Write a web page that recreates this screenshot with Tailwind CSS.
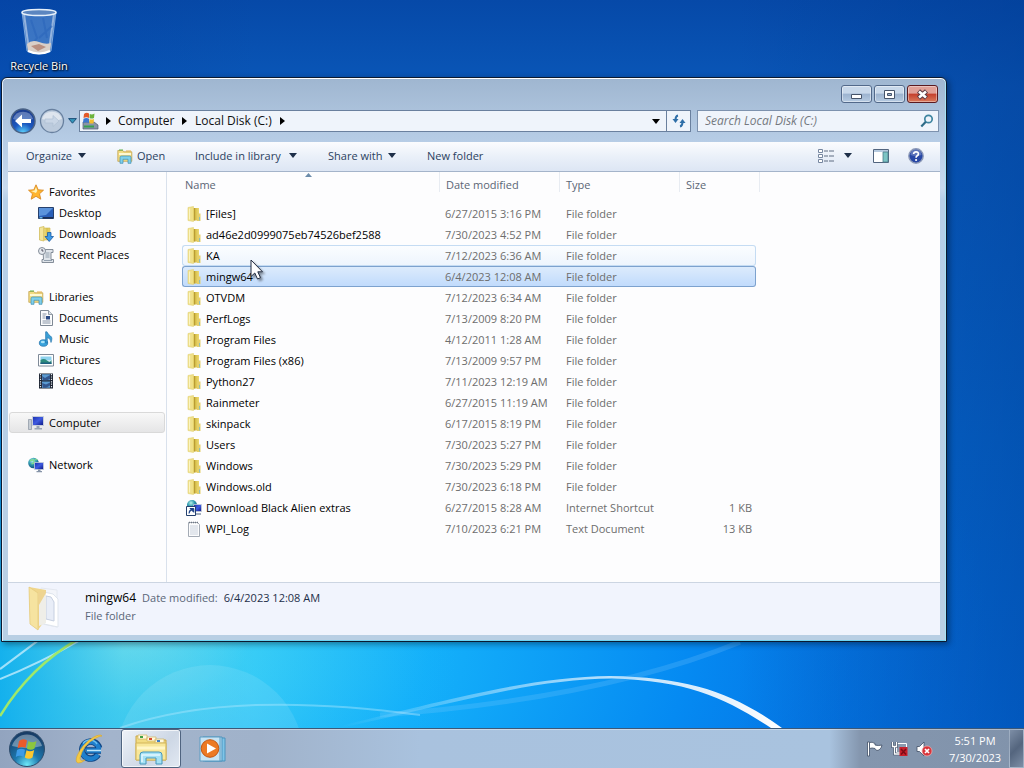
<!DOCTYPE html>
<html lang="en">
<head>
<meta charset="utf-8">
<title>Local Disk (C:)</title>
<script src="https://cdn.jsdelivr.net/npm/@tailwindcss/browser@4"></script>
</head>
<body class="h-screen flex flex-col overflow-hidden font-['Open_Sans','Noto_Sans',sans-serif] text-[11px] leading-4 text-black bg-[#0a55b5]">

<svg class="absolute w-0 h-0" aria-hidden="true">
  <defs>
    <linearGradient id="fold" x1="0" x2="1"><stop offset="0" stop-color="#f4e68e"/><stop offset=".5" stop-color="#d9c14c"/><stop offset="1" stop-color="#ecd975"/></linearGradient>
    <linearGradient id="scr" x1="0" y1="0" x2="1" y2="1"><stop offset="0" stop-color="#1a2fae"/><stop offset=".5" stop-color="#3f5be0"/><stop offset="1" stop-color="#0a1580"/></linearGradient>
    <radialGradient id="globe" cx=".4" cy=".3" r=".7"><stop offset="0" stop-color="#b8f0e8"/><stop offset=".5" stop-color="#2f9bb0"/><stop offset="1" stop-color="#14507e"/></radialGradient>
  </defs>
  <symbol id="folder" viewBox="0 0 16 18">
    <path d="M2 2.500 7.500 1.500V16.500L2 15.500Z" fill="#f0e08a" stroke="#e2d272" stroke-width=".6"/>
    <path d="M6 3h7v12.500H6Z" fill="url(#fold)"/>
    <path d="M8.500 3v12.500" stroke="#b99c34" stroke-width="1.200"/>
    <path d="M11 8.500h3.500v7.500H11Z" fill="#e5cf6a"/>
    <path d="M13.500 12v3.500" stroke="#8fc0b4"/>
    <path d="M3.500 3.500v11" stroke="#fbf4c0" stroke-width="1.200"/>
  </symbol>
  <symbol id="library" viewBox="0 0 16 16">
    <path d="M.8 2.500h5l1 1.300h8v9.500h-14z" fill="#f3dc83" stroke="#c4a652" stroke-width=".8"/>
    <path d="M2 5h12v2H2z" fill="#fff8d2"/><path d="M2 2h4" stroke="#5fae48"/><path d="M9 3h5" stroke="#e5b04a"/>
    <path d="M3 15.300V9.500q0-1.500 1.500-1.500h8Q14 8 14 9.500v5.800h-3v-4H6v4z" fill="#7fd0ea" stroke="#3e8eb4" stroke-width=".7"/>
  </symbol>
</svg>

<main class="relative flex-1 min-h-0 flex flex-col">
  <svg class="absolute inset-0 w-full h-full" viewBox="0 0 1024 729" preserveAspectRatio="none" aria-hidden="true">
    <defs>
      <linearGradient id="sky" x1="0" y1="0" x2="0" y2="1"><stop offset="0" stop-color="#0649a8"/><stop offset=".12" stop-color="#0a57b8"/><stop offset=".6" stop-color="#0668cf"/><stop offset="1" stop-color="#0470e2"/></linearGradient>
      <radialGradient id="glow" gradientUnits="userSpaceOnUse" cx="130" cy="640" r="860" gradientTransform="translate(0 256) scale(1 .6)"><stop offset="0" stop-color="#8cecf0"/><stop offset=".14" stop-color="#38cdf6"/><stop offset=".35" stop-color="#14b0fa"/><stop offset=".65" stop-color="#058af2"/><stop offset="1" stop-color="#0478e8" stop-opacity="0"/></radialGradient>
      <linearGradient id="dark" x1="0" x2="1"><stop offset="0" stop-color="#0038a0" stop-opacity=".25"/><stop offset=".25" stop-color="#003a8a" stop-opacity="0"/><stop offset=".72" stop-color="#003a90" stop-opacity="0"/><stop offset="1" stop-color="#003a90" stop-opacity=".45"/></linearGradient>
      <linearGradient id="arc" x1="0" x2="1"><stop offset="0" stop-color="#fff" stop-opacity="0"/><stop offset=".6" stop-color="#fff" stop-opacity=".7"/><stop offset="1" stop-color="#fff"/></linearGradient>
      <linearGradient id="lake" x1="0" x2="1"><stop offset="0" stop-color="#10b4f0" stop-opacity=".8"/><stop offset=".12" stop-color="#4fdcf4" stop-opacity=".5"/><stop offset=".45" stop-color="#18b4f8" stop-opacity="0"/></linearGradient>
    </defs>
    <path d="M0 0H1024V729H0z" fill="url(#sky)"/>
    <path d="M0 0H1024V729H0z" fill="url(#glow)"/>
    <path d="M0 0H1024V729H0z" fill="url(#dark)"/>
    <path d="M0 642H1024V729H0z" fill="url(#lake)"/>
    <circle cx="210" cy="760" r="94" fill="#fff" fill-opacity=".1"/>
    <path d="M0 680Q40 664 82 640M0 670Q20 655 40 640" stroke="#d8f4ff" stroke-opacity=".7" stroke-width="2" fill="none"/>
    <path d="M0 717Q30 668 78 640" stroke="#9fe86a" stroke-width="2.500" fill="none"/>
    <path d="M120 729Q230 690 420 716" stroke="#b8ecff" stroke-opacity=".4" stroke-width="2" fill="none"/>
    <path d="M340 727C450 700 530 678 610 677C690 678 735 695 782 729L771 729C725 699 690 682 612 679.500C530 680 450 706 340 729Z" fill="url(#arc)"/>
    <path d="M380 716Q600 700 740 643" stroke="#8fd4ff" stroke-opacity=".2" stroke-width="5" fill="none"/>
  </svg>

  <a href="#" class="relative w-[78px] h-[77px] flex flex-col items-center pt-2 text-white [text-shadow:1px_1px_2px_#000,0_0_2px_#001]">
    <svg class="w-10 h-[50px] shrink-0" viewBox="0 0 40 50" aria-hidden="true">
      <path d="M3 4 8 43Q20 49 32 43L37 4Z" fill="#6f9fdc" fill-opacity=".5" stroke="#bcd8f4" stroke-opacity=".6"/>
      <path d="M5 6 10 42M35 6 30 42" stroke="#fff" stroke-opacity=".45" stroke-width="2"/>
      <path d="M12 12 18 30 14 35M33 18 20 30M24 10 28 30" stroke="#2c66bb" stroke-opacity=".6" stroke-width="2" fill="none"/>
      <path d="M8 36Q13 31 20 34T32 35L31 43Q20 47 9 43Z" fill="#d9cfc8"/><path d="M12 38 20 36 27 39 19 43Z" fill="#b98f80"/><path d="M9 43Q20 48 31 43" stroke="#fff" stroke-width="2" fill="none"/>
      <ellipse cx="20" cy="4.500" rx="17" ry="3" fill="#5c86c0" stroke="#e6f0fa" stroke-width="1.500"/>
    </svg>
    <span>Recycle Bin</span>
  </a>

  <section class="relative flex-1 min-h-0 ml-px mr-[77px] mb-[86px] flex flex-col rounded-t-md border border-[#0b1a30] bg-[linear-gradient(#9fb6d0,#b7cde6_64px,#c8daee_110px,#b6cfe8_122px,#b9cfe4)] px-[6px] pb-[6px] [box-shadow:inset_0_1px_#fff,inset_1px_0_#e3eefa,inset_-1px_0_#a5e2f4,inset_0_-1px_#6fd4f2,2px_2px_6px_#0006]">
    <div class="flex justify-end gap-[2px] h-[30px] pt-[7px] pr-[2px] shrink-0">
      <button aria-label="Minimize" class="w-[31px] h-[18px] grid place-items-center rounded-[3px] border border-[#52698a] bg-[linear-gradient(#c8d8ea_45%,#9cb3cf_50%,#b6cbe2)] [box-shadow:inset_0_0_0_1px_#ffffff70]"><svg class="w-[13px] h-[11px]" viewBox="0 0 13 11"><path d="M1.500 5.500h10v4h-10z" fill="#fff" stroke="#46546a"/></svg></button>
      <button aria-label="Maximize" class="w-[31px] h-[18px] grid place-items-center rounded-[3px] border border-[#52698a] bg-[linear-gradient(#c8d8ea_45%,#9cb3cf_50%,#b6cbe2)] [box-shadow:inset_0_0_0_1px_#ffffff70]"><svg class="w-[13px] h-[11px]" viewBox="0 0 13 11"><path d="M1.500 1.500h10v8h-10z" fill="#fff" stroke="#46546a"/><path d="M4.500 4.500h4v2h-4z" fill="#9cb3cf" stroke="#46546a"/></svg></button>
      <button aria-label="Close" class="w-[31px] h-[18px] grid place-items-center rounded-[3px] border border-[#5a1a20] bg-[linear-gradient(#e0a097_45%,#c43f2c_50%,#d97a5c)] [box-shadow:inset_0_0_0_1px_#ffffff60]"><svg class="w-[13px] h-[11px]" viewBox="0 0 13 11"><path d="M2.500 2 10.500 9M10.500 2 2.500 9" stroke="#5a3a44" stroke-width="4.600"/><path d="M3 2.500 10 8.500M10 2.500 3 8.500" stroke="#fff" stroke-width="2.600"/></svg></button>
    </div>

    <div class="flex items-center h-[26px] mb-2 shrink-0 pr-px">
      <div class="flex items-center w-[71px] shrink-0 gap-[3px] pl-[2px]">
        <button aria-label="Back" class="w-[26px] h-[26px]"><svg viewBox="0 0 26 26"><defs><radialGradient id="bk" cx=".5" cy="1" r=".9"><stop offset="0" stop-color="#5fd8ff"/><stop offset=".45" stop-color="#1b58c0"/><stop offset="1" stop-color="#1c3f92"/></radialGradient></defs><circle cx="13" cy="13" r="12" fill="url(#bk)" stroke="#4a6285" stroke-width="1.500"/><path d="M3 11A10.500 10.500 0 0 1 23 11Q13 15 3 11" fill="#fff" fill-opacity=".3"/><path d="M5 13 12 6.500V11H21V15H12V19.500Z" fill="#fff"/></svg></button>
        <button aria-label="Forward" class="w-[26px] h-[26px]"><svg viewBox="0 0 26 26"><circle cx="13" cy="13" r="11.500" fill="#bccbdd" stroke="#68809f" stroke-width="1.300"/><path d="M3 11A10.500 10.500 0 0 1 23 11Q13 15 3 11" fill="#fff" fill-opacity=".5"/><path d="M20 13 14 7.500V11H6V15H14V18.500Z" fill="#c9d6e6" stroke="#b0c0d3" stroke-width=".7"/></svg></button>
        <button aria-label="Recent pages" class="w-[9px] h-[6px]"><svg viewBox="0 0 9 6"><path d="M.6.6h7.800L4.500 5.200Z" fill="#3596bb" stroke="#1d4f78"/></svg></button>
      </div>
      <nav aria-label="Address" class="flex flex-1 items-center h-[22px] border border-[#6a809e] bg-[#eff4fb] text-[#111] min-w-0">
        <svg class="w-[18px] h-[18px] ml-px" viewBox="0 0 18 18" aria-hidden="true"><path d="M2 10h11l4 3v4H2z" fill="#8895a8" stroke="#4e5c70" stroke-width=".7"/><path d="M3 13.500h10v2H3z" fill="#37a050"/><path d="M3 2Q5.500 0 8 1.500V6Q5.500 4.500 2.500 6Z" fill="#e2592a"/><path d="M8.700 2Q11 3 13.500 1.500L13 6Q10.500 7 8.500 6Z" fill="#6cb33c"/><path d="M2.500 6.700Q5.500 5.500 8 6.700V11Q5 9.500 2 11Z" fill="#3c78d0"/><path d="M8.500 7Q10.500 8 13 7L12.500 11.500H8.300Z" fill="#f2bd2c"/></svg>
        <svg class="w-[5px] h-2 ml-[7px]" viewBox="0 0 5 8" aria-hidden="true"><path d="M0 0 5 4 0 8Z"/></svg>
        <a href="#" class="ml-[7px] w-[55px] text-[12px]">Computer</a>
        <svg class="w-[5px] h-2 ml-[9px]" viewBox="0 0 5 8" aria-hidden="true"><path d="M0 0 5 4 0 8Z"/></svg>
        <a href="#" class="ml-2 w-[76px] text-[12px] whitespace-nowrap">Local Disk (C:)</a>
        <svg class="w-[5px] h-2 ml-[9px]" viewBox="0 0 5 8" aria-hidden="true"><path d="M0 0 5 4 0 8Z"/></svg>
        <button aria-label="Previous locations" class="ml-auto mr-[6px]"><svg class="w-2 h-[5px]" viewBox="0 0 8 5"><path d="M0 0H8L4 5Z"/></svg></button>
        <button aria-label="Refresh" class="w-6 h-full grid place-items-center border-l border-[#6a809e]"><svg class="w-[14px] h-[14px]" viewBox="0 0 14 14" fill="none" stroke="#2f6fa8" stroke-width="2"><path d="M6 1.500Q3.500 2 3.500 6"/><path d="M.5 5h6L3.500 9Z" fill="#2f6fa8" stroke="none"/><path d="M8 12.500Q10.500 12 10.500 8"/><path d="M7.500 9h6L10.500 5Z" fill="#2f6fa8" stroke="none"/></svg></button>
      </nav>
      <div class="ml-[6px] w-[242px] h-[22px] flex items-center border border-[#7d92ae] bg-[#eff4fb] pl-[7px] pr-1">
        <input type="text" aria-label="Search Local Disk (C:)" placeholder="Search Local Disk (C:)" class="flex-1 min-w-0 bg-transparent italic text-[12px] outline-none placeholder:text-[#75797f]">
        <svg class="w-[14px] h-[14px]" viewBox="0 0 14 14" fill="none" aria-hidden="true"><circle cx="8.500" cy="5" r="3.700" stroke="#3f85a0" stroke-width="1.700"/><path d="M5.800 7.800 1.300 12.500" stroke="#2f6c88" stroke-width="2.200"/></svg>
      </div>
    </div>

    <div class="flex items-center h-[30px] pb-[2px] shrink-0 bg-[linear-gradient(#fbfcfe,#eaf0f9_50%,#dde6f4)] border-b border-[#a4b4ca] text-[#2b4160] pl-[18px] pr-[16px] whitespace-nowrap">
      <button class="flex items-center gap-[6px] w-[91px]">Organize <svg class="w-2 h-[5px]" viewBox="0 0 8 5"><path d="M0 0H8L4 5Z" fill="#1e2f49"/></svg></button>
      <button class="flex items-center gap-1 w-[78px]"><svg class="w-4 h-4"><use href="#library"/></svg>Open</button>
      <button class="flex items-center gap-2 w-[133px]">Include in library <svg class="w-2 h-[5px]" viewBox="0 0 8 5"><path d="M0 0H8L4 5Z" fill="#1e2f49"/></svg></button>
      <button class="flex items-center gap-[6px] w-[99px]">Share with <svg class="w-2 h-[5px]" viewBox="0 0 8 5"><path d="M0 0H8L4 5Z" fill="#1e2f49"/></svg></button>
      <button>New folder</button>
      <button aria-label="Change your view" class="ml-auto flex items-center gap-[10px]"><svg class="w-4 h-[14px]" viewBox="0 0 16 14" fill="none"><path d="M.5.500h4v3h-4zM.5 5.500h4v3h-4zM.5 10.500h4v3h-4z" fill="#fff" stroke="#7787a0"/><path d="M6 2h4M11 2h5M6 7h4M11 7h5M6 12h4M11 12h5" stroke="#5f6c82"/></svg><svg class="w-2 h-[5px]" viewBox="0 0 8 5"><path d="M0 0H8L4 5Z" fill="#1e2f49"/></svg></button>
      <button aria-label="Show the preview pane" class="ml-[21px]"><svg class="w-4 h-[14px]" viewBox="0 0 16 14"><path d="M.5.500h15v13H.5z" fill="#fff" stroke="#51647e"/><path d="M1 1h14v2H1z" fill="#b7cbe0"/><path d="M10 3h5v10h-5z" fill="#7cc4c4" stroke="#4c7d8e" stroke-width=".8"/></svg></button>
      <button aria-label="Get help" class="ml-[19px]"><svg class="w-4 h-4" viewBox="0 0 16 16" fill="none"><circle cx="8" cy="8" r="7.200" fill="#2747a5" stroke="#8d9ab8" stroke-width="1.400"/><path d="M2.500 7A5.500 5.500 0 0 1 13.500 7Q8 9 2.500 7" fill="#fff" fill-opacity=".25"/><path d="M5.600 6Q5.800 3.800 8.100 3.800T10.400 5.900Q10.400 7 9.200 7.800T8.100 9.800" stroke="#fff" stroke-width="1.700"/><circle cx="8.100" cy="12" r="1.100" fill="#fff"/></svg></button>
    </div>

    <div class="flex flex-1 min-h-0 bg-[#fdfdfe]">
      <nav aria-label="Folders" class="w-[159px] shrink-0 border-r border-[#d9e1ec] pt-[9px] flex flex-col gap-[21px] whitespace-nowrap">
        <ul>
          <li><a href="#" class="flex items-center h-[21px] pl-5 gap-[5px]"><svg class="w-4 h-4" viewBox="0 0 16 16"><path d="M8 .8 10.200 5.800 15.500 6.200 11.500 9.800 12.800 15.200 8 12.300 3.200 15.200 4.500 9.800.5 6.200 5.800 5.800Z" fill="#ffb52e" stroke="#d98a25" stroke-width=".9"/><path d="M8 3 9.300 6.800 8 9 3 7 6.500 6.600Z" fill="#fff3b8"/></svg>Favorites</a></li>
          <li><a href="#" class="flex items-center h-[21px] pl-[30px] gap-[5px]"><svg class="w-4 h-4" viewBox="0 0 16 16"><path d="M.5 2.500h15v11H.5z" fill="#2a5fb8" stroke="#27406c"/><path d="M1 3h14L8 10 1 11Z" fill="#5b93dc"/><path d="M1 12h14v1.500H1z" fill="#1d2f55"/><path d="M1.500 12h3v1.500h-3z" fill="#6fb8e8"/></svg>Desktop</a></li>
          <li><a href="#" class="flex items-center h-[21px] pl-[30px] gap-[5px]"><svg class="w-4 h-4" viewBox="0 0 16 16"><path d="M1.500 1.500 6 .5V15L1.500 14Z" fill="#f3e59c" stroke="#cdb64d" stroke-width=".7"/><path d="M6 2h6v12H6Z" fill="url(#fold)" stroke="#cdb64d" stroke-width=".6"/><path d="M9.500 6.500h3.500v4h2.500L11.200 15.500 7 10.500h2.500Z" fill="#3d9be8" stroke="#1c5aa5" stroke-width=".8"/></svg>Downloads</a></li>
          <li><a href="#" class="flex items-center h-[21px] pl-[30px] gap-[5px]"><svg class="w-4 h-4" viewBox="0 0 16 16" stroke="#78828e" stroke-width=".9"><path d="M5 2.500h10v3h-2v7h2.500v3H4v-3h1.500Z" fill="#dfe4ea"/><path d="M7.500 6h4M7.500 8h4M7.500 10h4M6 13.500h8" stroke="#8b99a8"/><circle cx="4" cy="4" r="3.500" fill="#e6eaef"/><path d="M4 2v2h1.500" fill="none" stroke="#445"/></svg>Recent Places</a></li>
        </ul>
        <ul>
          <li><a href="#" class="flex items-center h-[21px] pl-5 gap-[5px]"><svg class="w-4 h-4"><use href="#library"/></svg>Libraries</a></li>
          <li><a href="#" class="flex items-center h-[21px] pl-[30px] gap-[5px]"><svg class="w-4 h-4" viewBox="0 0 16 16"><path d="M2.500.500h8l4 4v11h-12z" fill="#fbfcfd" stroke="#7e8894"/><path d="M10.500.500v4h4" fill="#d9dfe6" stroke="#7e8894" stroke-width=".8"/><path d="M4.500 4h4M4.500 6h3M4.500 8h3M4.500 11h8M4.500 13h8" stroke="#8793a5"/><path d="M8 6h4v3.500H8z" fill="#2d4c86"/></svg>Documents</a></li>
          <li><a href="#" class="flex items-center h-[21px] pl-[30px] gap-[5px]"><svg class="w-4 h-4" viewBox="0 0 16 16"><ellipse cx="5.500" cy="12" rx="4.200" ry="3.300" fill="#3aa3dc" stroke="#1d6ea8" stroke-width=".7"/><path d="M7.600 12V.8H9Q10 3.500 12.500 5T13 11.500Q12.800 7.500 9.300 6.500V12Z" fill="#3b9fd6" stroke="#1d6ea8" stroke-width=".6"/><ellipse cx="4.800" cy="11" rx="2" ry="1.200" fill="#a8e2f8"/></svg>Music</a></li>
          <li><a href="#" class="flex items-center h-[21px] pl-[30px] gap-[5px]"><svg class="w-4 h-4" viewBox="0 0 16 16"><path d="M.5 2.500h15v11.500H.5z" fill="#fff" stroke="#7f8a98"/><path d="M2.500 4.500h11v4h-11z" fill="#8ed2ee"/><path d="M2.500 8Q6 6 9 8.500T13.500 8V12h-11z" fill="#2d8a7c"/><path d="M2.500 10.500h11V12h-11z" fill="#1e5f80"/></svg>Pictures</a></li>
          <li><a href="#" class="flex items-center h-[21px] pl-[30px] gap-[5px]"><svg class="w-4 h-4" viewBox="0 0 16 16"><path d="M1 .5h14v15H1z" fill="#1b2230"/><path d="M4 1.200h8v6H4zM4 8.500h8v6.300H4z" fill="#5b9bd2"/><path d="M4 3 7 5 12 2v4L9 7.200H5ZM4 10l4 1.500 4-2v3L8 14.800H5Z" fill="#33568c"/><path d="M2.500 1v14M13.500 1v14" stroke="#e6ebf2" stroke-width="1.200" stroke-dasharray="1.200 1.200"/></svg>Videos</a></li>
        </ul>
        <ul>
          <li><a href="#" aria-current="true" class="flex items-center h-[21px] ml-px mr-px pl-[18px] gap-[5px] rounded-[3px] border border-[#d9d9d9] bg-[linear-gradient(#f8f8f8,#e5e5e6)]"><svg class="w-4 h-4" viewBox="0 0 16 16"><path d="M.5 4.500h3v10h-3z" fill="#c5ccd4" stroke="#8a94a0" stroke-width=".7"/><path d="M4.500 1.500h11v9h-11z" fill="url(#scr)" stroke="#c7ced9"/><path d="M8.500 11h3v2h-3zM6.500 13h7.500v1.500H6.500z" fill="#99a5b4"/></svg>Computer</a></li>
        </ul>
        <ul>
          <li><a href="#" class="flex items-center h-[21px] pl-5 gap-[5px]"><svg class="w-4 h-4" viewBox="0 0 16 16"><circle cx="5.500" cy="6" r="5.300" fill="url(#globe)"/><path d="M2 4Q5 2 6 4T3.500 7M7 2l2 1" stroke="#7fdc8a" stroke-width="1.300" fill="none"/><path d="M6.500 5.500h9v7h-9z" fill="url(#scr)" stroke="#c7ced9" stroke-width=".8"/><path d="M10 12.500h2.500v1.500H10zM8.500 14h5.500v1.200H8.500z" fill="#8694a8"/></svg>Network</a></li>
        </ul>
      </nav>

      <div class="relative flex-1 min-w-0 pl-[15px]">
        <svg class="absolute left-[138px] top-px w-[7px] h-1" viewBox="0 0 7 4" aria-hidden="true"><path d="M0 4 3.500 0 7 4Z" fill="#6c8caa"/></svg>
        <table class="w-[574px] table-fixed border-separate border-spacing-0 text-left whitespace-nowrap text-[#6d6d6d]">
          <colgroup><col class="w-[258px]"><col class="w-[120px]"><col class="w-[120px]"><col class="w-[76px]"></colgroup>
          <thead class="text-[#5b6675]">
            <tr class="h-[31px] align-top">
              <th class="p-0 font-normal"><span class="block h-5 pt-[5px] pl-[3px] border-r border-[#e8ecf2]">Name</span></th>
              <th class="p-0 font-normal"><span class="block h-5 pt-[5px] pl-[6px] border-r border-[#e8ecf2]">Date modified</span></th>
              <th class="p-0 font-normal"><span class="block h-5 pt-[5px] pl-[6px] border-r border-[#e8ecf2]">Type</span></th>
              <th class="p-0 font-normal"><span class="block h-5 w-20 pt-[5px] pl-[6px] border-r border-[#e8ecf2]">Size</span></th>
            </tr>
          </thead>
          <tbody id="rows"></tbody>
        </table>
      </div>
    </div>

    <footer class="flex h-[53px] shrink-0 items-start border-t border-[#ccd5e2] bg-[#f1f4fd] text-[#5a6678]">
      <svg class="ml-4 mt-[2px] w-[41px] h-[46px]" viewBox="0 0 41 46" aria-hidden="true"><path d="M17 3 33 5V42L14 38Z" fill="#f3f5fa" stroke="#e4e8f0"/><path d="M20 7 29 9 34 14V42L20 39Z" fill="#fff" stroke="#dfe5ee"/><path d="M22 11 27 12 30 17V36L22 34Z" fill="#e8edf7" stroke="#c6cfe0"/><path d="M5 2 22 5V34L14 45 6 38Z" fill="#f0d68c"/><path d="M5 2 14 8V45L6 39Z" fill="#f6e3a0" stroke="#e6cc80" stroke-width=".8"/><path d="M14 8 22 5V20L15 34Z" fill="#eed491"/><path d="M15 20 22 8V38L15 41Z" fill="#efeee8"/></svg>
      <div class="ml-5 pt-[7px]">
        <p class="flex gap-[6px] h-[18px]"><strong class="font-normal text-[12px] text-black">mingw64</strong><span>Date modified:</span><span class="text-[#1e2f49]">6/4/2023 12:08 AM</span></p>
        <p>File folder</p>
      </div>
    </footer>
  </section>

  <svg class="absolute left-[250px] top-[259px] w-4 h-6 drop-shadow-[2px_2px_1px_#0006]" viewBox="0 0 16 24" aria-hidden="true"><path d="M1 1V17.500L4.800 14 7.500 20 10.500 18.700 7.800 12.800H12.500Z" fill="#fff" stroke="#222c40" stroke-width="1"/></svg>
</main>

<footer class="flex items-stretch h-10 shrink-0 border-t border-[#3c5878] bg-[linear-gradient(90deg,#92a4bf,#a3b4cc_110px,#a0b2ca_260px,#a9c2de_420px,#a9c3df_81%,#8496ae_84%,#8193ab)] [box-shadow:inset_0_1px_#ffffff60]">
  <button aria-label="Start" class="ml-2 w-[38px]"><svg class="w-[38px] h-[38px]" viewBox="0 0 38 38"><defs><radialGradient id="orb" cx=".5" cy=".95" r=".9"><stop offset="0" stop-color="#6fe8f8"/><stop offset=".4" stop-color="#1d78ae"/><stop offset="1" stop-color="#173c66"/></radialGradient></defs><circle cx="19" cy="19" r="17.500" fill="url(#orb)" stroke="#2e4c6c"/><path d="M4 16A15.500 15.500 0 0 1 34 16Q19 20 4 16" fill="#fff" fill-opacity=".35"/><path d="M11 11Q15 8 19 10.500L17.500 18Q14 16 9.500 18.500Z" fill="#ea5a2b"/><path d="M20.500 11Q24 13.500 28.500 11L26.500 18.500Q23 21 18.800 18.500Z" fill="#8cc63f"/><path d="M9 20Q13 17.500 17 19.800L15.500 27Q12 24.500 7.800 27Z" fill="#3d9be8"/><path d="M18.500 20.300Q22 22.500 26.200 20L24.500 27.500Q21 30 16.800 27.500Z" fill="#fdc72f"/></svg></button>
  <button aria-label="Internet Explorer" class="ml-[27px] w-8 grid place-items-center"><svg class="w-8 h-8" viewBox="0 0 32 32" fill="none"><path d="M28 17.500H13M25 21.500A8.500 8.500 0 1 1 26 15" stroke="#0e4484" stroke-width="6.500"/><path d="M28 17.500H13M25 21.500A8.500 8.500 0 1 1 26 16" stroke="#1f7fcc" stroke-width="4.500"/><path d="M10 10.500A8.500 8.500 0 0 1 24 11" stroke="#6cc0f0" stroke-width="1.500"/><path d="M28 17.500H14" stroke="#bfe6fa" stroke-width="1.500"/><path d="M29 3Q27 .5 20 4.500Q9 11 4 23Q2 29 5 30Q8 30.500 12 27Q7 29 7 25Q10 12 22 5.500Q27 2.500 29 3Z" fill="#f5ca45" stroke="#d9a935" stroke-width=".7"/></svg></button>
  <button aria-label="Windows Explorer" class="ml-4 w-[60px] grid place-items-center rounded-[3px] border border-[#4f6480] bg-[linear-gradient(135deg,#eef2f8,#cdd7e5_60%,#e2e9f2)] [box-shadow:inset_0_0_0_1px_#ffffffb0]"><svg class="w-[34px] h-[32px]" viewBox="0 0 34 32"><path d="M2 3h9l2 2h8l2 2h9v20H2z" fill="#f2dc82" stroke="#c9a74c"/><path d="M4 2h9v4H4zM13 4h9v4h-9zM21 6h9v4h-9z" fill="#fff9df" stroke="#cfb35f" stroke-width=".7"/><path d="M6 4h3" stroke="#3fa044" stroke-width="2"/><path d="M15 6h3" stroke="#d8482c" stroke-width="2"/><path d="M23 8h3" stroke="#3f7fc4" stroke-width="2"/><path d="M2 10h30v17H2z" fill="#f8e79a" stroke="#d3b65a"/><path d="M3 15h28" stroke="#fff6c8" stroke-width="3"/><path d="M6 31V22q0-3 3-3h16q3 0 3 3v9h-6v-6H12v6z" fill="#a6e2f4" stroke="#4596bc"/><path d="M8 29v-7h18" stroke="#e3f8ff" stroke-width="1.500" fill="none"/></svg></button>
  <button aria-label="Windows Media Player" class="ml-4 w-8 grid place-items-center"><svg class="w-7 h-7" viewBox="0 0 28 28"><path d="M6 3h20v23H6z" fill="#7fc5e8" stroke="#4c93bd"/><path d="M4 2h19v24H4z" fill="#b3dcf1" stroke="#4c93bd"/><path d="M1 2h20v24H1z" fill="#c8e4f4" stroke="#5c9cc2"/><circle cx="11" cy="13.500" r="8.800" fill="#ec7a24" stroke="#c55712"/><path d="M8 8.500 17 13.500 8 18.500Z" fill="#fff"/></svg></button>
  <div class="ml-auto flex items-center gap-2">
    <button aria-label="Action Center"><svg class="w-[17px] h-4" viewBox="0 0 17 16"><path d="M1.500 1h2v14h-2z" fill="#fff" stroke="#3f4e64" stroke-width=".8"/><path d="M3.500 1.500Q6 .5 9 2.500V4Q12 5 16 4Q15 9 11 9.500Q9.500 9 9 7.500Q6 6.500 3.500 7.500Z" fill="#fff" stroke="#3f4e64" stroke-width=".8"/></svg></button>
    <button aria-label="Network"><svg class="w-[17px] h-4" viewBox="0 0 17 16"><path d="M5.500 2.500h10v9h-10z" fill="#8b9aae" stroke="#fff"/><path d="M1.500 1v4.500h4V1M3.500 5.500V13H9" fill="none" stroke="#3f4e64" stroke-width="2.600"/><path d="M1.500 1v4.500h4V1M3.500 5.500V13H9" fill="none" stroke="#fff" stroke-width="1.300"/><path d="M8.500 6h8v9h-8z" fill="#c7202c"/><path d="m10 8 5 5.500M15 8l-5 5.500" stroke="#7c0c16" stroke-width="1.500"/></svg></button>
    <button aria-label="Volume muted"><svg class="w-[17px] h-4" viewBox="0 0 17 16"><path d="M1 5.500h2.500L8 1v14L3.500 10.500H1Z" fill="#fff" stroke="#3f4e64" stroke-width=".8"/><circle cx="11" cy="10" r="5" fill="#d8343a" stroke="#f2b5b5" stroke-width=".7"/><path d="m9 8 4 4M13 8l-4 4" stroke="#fff" stroke-width="1.700"/></svg></button>
    <div class="w-[68px] text-center text-white leading-[17px]"><p>5:51 PM</p><p>7/30/2023</p></div>
  </div>
  <button aria-label="Show desktop" class="w-[15px] border border-[#c3d0e0a0] bg-[linear-gradient(135deg,#7d8ea6,#54657e_50%,#7d8ea6)]"></button>
</footer>

<script>
const F = 'File folder';
const files = [
  ['[Files]', '6/27/2015 3:16 PM', F], ['ad46e2d0999075eb74526bef2588', '7/30/2023 4:52 PM', F],
  ['KA', '7/12/2023 6:36 AM', F], ['mingw64', '6/4/2023 12:08 AM', F], ['OTVDM', '7/12/2023 6:34 AM', F],
  ['PerfLogs', '7/13/2009 8:20 PM', F], ['Program Files', '4/12/2011 1:28 AM', F], ['Program Files (x86)', '7/13/2009 9:57 PM', F],
  ['Python27', '7/11/2023 12:19 AM', F], ['Rainmeter', '6/27/2015 11:19 AM', F], ['skinpack', '6/17/2015 8:19 PM', F],
  ['Users', '7/30/2023 5:27 PM', F], ['Windows', '7/30/2023 5:29 PM', F], ['Windows.old', '7/30/2023 6:18 PM', F],
  ['Download Black Alien extras', '6/27/2015 8:28 AM', 'Internet Shortcut', '1 KB'], ['WPI_Log', '7/10/2023 6:21 PM', 'Text Document', '13 KB']
];
const icon = {
  [F]: '<svg class="w-4 h-[18px]"><use href="#folder"/></svg>',
  'Internet Shortcut': '<svg class="w-4 h-4" viewBox="0 0 16 16"><circle cx="6" cy="5" r="5" fill="url(#globe)"/><path d="M7.500 4.500h8v7h-8z" fill="url(#scr)" stroke="#c7ced9" stroke-width=".8"/><path d="M9 14h6" stroke="#8694a8" stroke-width="1.500"/><path d="M.5 6.500h9v9h-9z" fill="#fff" stroke="#24406e"/><path d="M3 13.500Q2.500 10 6 9.500M4 8.500h3.800v3.800Z" fill="#1a3f86" stroke="#1a3f86" stroke-width="1"/></svg>',
  'Text Document': '<svg class="w-4 h-4" viewBox="0 0 16 16"><path d="M2.500 1.500h9l2 2v12h-11z" fill="#fcfcfd" stroke="#a4abb5"/><path d="M4 5h8M4 7h8M4 9h8M4 11h8M4 13h8" stroke="#bcc6d3" stroke-width=".8"/><path d="M3 1.500h9" stroke="#6f7884" stroke-dasharray="1 1" stroke-width="1.600"/></svg>'
};
const look = {
  'KA': ['border-[#c5dcf3] bg-[linear-gradient(#fbfdff,#eef5fd)]'],
  'mingw64': ['border-[#7da2ce] bg-[linear-gradient(#dcebfc,#c1dbfc)]']
};
document.getElementById('rows').innerHTML = files.map(([n, d, t, s = '']) => {
  const c = look[n] || 'border-transparent';
  return `<tr class="h-[21px]">
    <td class="p-0 border-y border-l rounded-l-[3px] ${c}"><span class="flex items-center h-[19px] pl-[3px] gap-1 text-black">${icon[t]}${n}</span></td>
    <td class="p-0 pl-[5px] border-y ${c}">${d}</td>
    <td class="p-0 pl-[6px] border-y ${c}">${t}</td>
    <td class="p-0 pr-[3px] border-y border-r rounded-r-[3px] text-right ${c}">${s}</td></tr>`;
}).join('');
</script>
</body>
</html>
